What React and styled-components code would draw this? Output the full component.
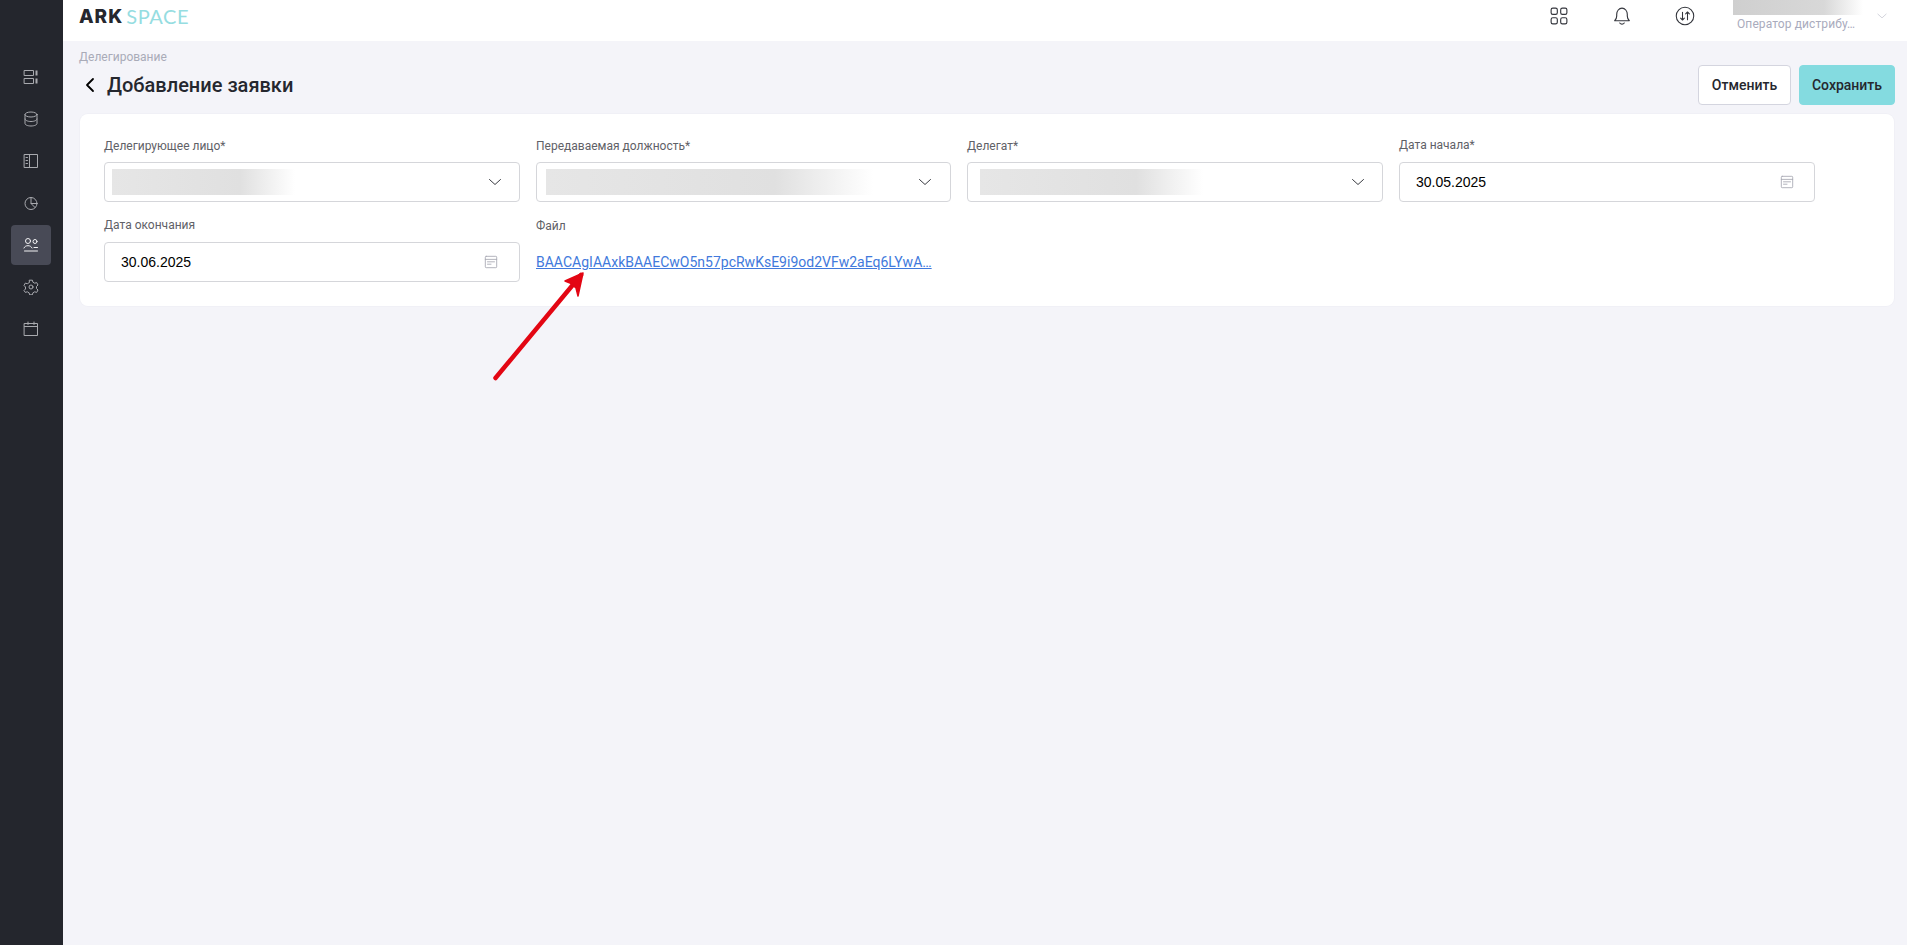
import React from 'react'
import styled, { createGlobalStyle } from 'styled-components'

const GlobalStyle = createGlobalStyle`
    html, body {
        margin: 0;
        padding: 0;
        height: 100%;
        overflow: hidden;
        background-color: #f4f4f9;
        font-family: Roboto, "Liberation Sans", sans-serif;
    }
    * {
        box-sizing: border-box;
    }
`

const Page = styled.div`
    position: relative;
    display: flex;
    height: 945px;
`

const Sidebar = styled.nav`
    display: flex;
    flex-direction: column;
    align-items: center;
    gap: 2px;
    flex: 0 0 63px;
    padding: 57px 1px 0 0;
    background-color: #24262d;
`

const NavItem = styled.div`
    display: flex;
    align-items: center;
    justify-content: center;
    width: 40px;
    height: 40px;
    border-radius: 4px;
    color: ${p => (p.$active ? '#f2f2f4' : '#a9aaaf')};
    background-color: ${p => (p.$active ? '#484a56' : 'transparent')};
`

const Main = styled.div`
    flex: 1;
    display: flex;
    flex-direction: column;
    min-width: 0;
`

const Header = styled.header`
    display: flex;
    justify-content: space-between;
    height: 41px;
    padding: 0 19px 0 16px;
    background-color: #fff;
`

const Logo = styled.div`
    display: flex;
    align-items: center;
    height: 32px;
    font-size: 20px;
    line-height: 1;
`

const LogoDark = styled.span`
    font-family: Inter, sans-serif;
    font-size: 19px;
    font-weight: 800;
    letter-spacing: 1px;
    color: #25272e;
`

const LogoLight = styled.span`
    margin-left: 3px;
    font-family: Lato, sans-serif;
    font-weight: 400;
    letter-spacing: 0.6px;
    color: #96dde1;
`

const HeaderRight = styled.div`
    display: flex;
    align-items: flex-start;
`

const HeaderIcons = styled.div`
    display: flex;
    align-items: center;
    gap: 44px;
    height: 32px;
    color: #33353c;
`

const GridIconSlot = styled.span`
    display: flex;
    margin-right: 1px;
`

const UserBlock = styled.div`
    width: 130px;
    margin-left: 38px;
`

const UserName = styled.div`
    height: 15px;
    background: linear-gradient(90deg, #cfcfcf 0%, #d8d8d8 70%, #ffffff 100%);
`

const UserRole = styled.div`
    margin-top: 2px;
    padding-left: 4px;
    font-size: 12px;
    line-height: 14px;
    letter-spacing: 0.1px;
    color: #a9abbd;
    white-space: nowrap;
`

const UserChevron = styled.div`
    display: flex;
    align-items: center;
    height: 32px;
    margin-left: 13px;
    color: #c4c6d0;
`

const Content = styled.main`
    padding: 0 13px 0 17px;
`

const Breadcrumb = styled.div`
    height: 24px;
    margin-left: -1px;
    padding-top: 9px;
    font-size: 12px;
    line-height: 14px;
    color: #a9abb8;
`

const TitleRow = styled.div`
    display: flex;
    align-items: center;
    justify-content: space-between;
    height: 40px;
`

const TitleGroup = styled.div`
    display: flex;
    align-items: center;
    gap: 9px;
    padding-left: 2px;
`

const Title = styled.h1`
    margin: 0;
    font-size: 20px;
    line-height: 24px;
    font-weight: 500;
    color: #25272e;
`

const Actions = styled.div`
    display: flex;
    gap: 8px;
    margin-right: -1px;
`

const Button = styled.button`
    height: 40px;
    width: ${p => p.$width}px;
    padding: 0;
    border-radius: 4px;
    border: 1px solid ${p => (p.$primary ? '#84dbe0' : '#d4d5df')};
    background-color: ${p => (p.$primary ? '#84dbe0' : '#fff')};
    font-family: Roboto, sans-serif;
    font-size: 14px;
    font-weight: 500;
    color: #25272e;
`

const Card = styled.section`
    display: grid;
    grid-template-columns: 416px 415px 416px 416px;
    column-gap: 16px;
    row-gap: 16px;
    height: 192px;
    margin-top: 9px;
    padding: 24px;
    border-radius: 8px;
    background-color: #fff;
    box-shadow: 0 0 0 1px #f0f0f6;
`

const Field = styled.div`
    min-width: 0;
`

const Label = styled.div`
    height: 24px;
    padding-top: ${p => (p.$raised ? 0 : 1)}px;
    font-size: 12px;
    line-height: 14px;
    color: #5f6167;
`

const Control = styled.div`
    display: flex;
    align-items: center;
    justify-content: space-between;
    height: 40px;
    padding: 0 ${p => p.$right}px 0 ${p => p.$left}px;
    border: 1px solid #d5d6da;
    border-radius: 4px;
    background-color: #fff;
    color: #3a3c42;
`

const BlurredValue = styled.div`
    width: ${p => p.$width}px;
    height: 26px;
    background: linear-gradient(90deg, #e6e6e6 0%, #e0e0e0 70%, #ffffff 100%);
`

const DateValue = styled.span`
    font-family: "Liberation Sans", Arial, sans-serif;
    font-size: 14px;
    color: #000;
`

const DateIcon = styled.span`
    display: flex;
    color: #a8a9b4;
`

const FileLink = styled.a`
    display: block;
    margin-top: 11px;
    font-size: 14px;
    line-height: 18px;
    color: #4179dc;
    text-decoration: underline;
    white-space: nowrap;
`

const Arrow = styled.svg`
    position: absolute;
    left: 490px;
    top: 265px;
    pointer-events: none;
`

const Icon = ({ size = 16, sw = 1, children }) => (
    <svg
        width={size}
        height={size}
        viewBox="0 0 16 16"
        fill="none"
        stroke="currentColor"
        strokeWidth={sw}
        strokeLinecap="round"
        strokeLinejoin="round"
    >
        {children}
    </svg>
)

const navIcons = [
    <>
        <rect x="1.5" y="1.5" width="9" height="5" />
        <rect x="1.5" y="9.5" width="9" height="5" />
        <path d="M13.5 1.5v5M13.5 9.5v5" strokeWidth="2" strokeLinecap="butt" />
    </>,
    <>
        <ellipse cx="8" cy="3.5" rx="6" ry="2.5" />
        <path d="M2 3.5v9c0 1.4 2.7 2.5 6 2.5s6-1.1 6-2.5v-9" />
        <path d="M2 8c0 1.4 2.7 2.5 6 2.5s6-1.1 6-2.5" />
    </>,
    <>
        <rect x="1.5" y="1.5" width="13" height="13" />
        <path d="M6.5 1.5v13M3 4.5h1.5M3 7.5h1.5M3 10.5h1.5" />
    </>,
    <>
        <circle cx="8" cy="8.5" r="6" />
        <path d="M8 2.5v6h6" />
        <path d="M8 8.5l4 4" />
    </>,
    <>
        <circle cx="5" cy="4" r="2.5" />
        <circle cx="12" cy="4.5" r="2" />
        <path d="M1 11c.6-1.5 2-2.3 4-2.3s3.2.8 4 2.3M1.5 14h13M11 10.5h3.5" />
    </>,
    <>
        <path d="M6.6 1.5h2.8l.5 2 1.8 1 2-.6 1.3 2.4-1.5 1.5v2l1.5 1.5-1.3 2.4-2-.6-1.8 1-.5 2H6.6l-.5-2-1.8-1-2 .6L1 11.8l1.5-1.5v-2L1 6.8l1.3-2.4 2 .6 1.8-1z" transform="translate(0 -.3)" />
        <circle cx="8" cy="8" r="2" />
    </>,
    <>
        <rect x="1.5" y="2.5" width="13" height="12" />
        <path d="M1.5 5.5h13M5 1v2.5M11 1v2.5" />
    </>,
]

const Chevron = ({ size = 16 }) => (
    <Icon size={size}>
        <path d="M2.5 5.5L8 10.5l5.5-5" />
    </Icon>
)

const CalendarIcon = () => (
    <Icon size={14}>
        <rect x="1.5" y="1.5" width="13" height="13" rx="1" />
        <path d="M1.5 5h13M4 7.8h8M4 10.5h4" />
    </Icon>
)

const selects = [
    { label: 'Делегирующее лицо*', blur: 183, left: 7, right: 16 },
    { label: 'Передаваемая должность*', blur: 327, left: 9, right: 17 },
    { label: 'Делегат*', blur: 223, left: 12, right: 16 },
]

const App = () => {
    return (
        <Page>
            <GlobalStyle />
            <Sidebar>
                {navIcons.map((icon, i) => (
                    <NavItem key={i} $active={i === 4}>
                        <Icon>{icon}</Icon>
                    </NavItem>
                ))}
            </Sidebar>
            <Main>
                <Header>
                    <Logo>
                        <LogoDark>ARK</LogoDark>
                        <LogoLight>SPACE</LogoLight>
                    </Logo>
                    <HeaderRight>
                        <HeaderIcons>
                            <GridIconSlot>
                                <Icon size={18}>
                                    <rect x="1" y="1" width="5.5" height="5.5" rx="1.5" />
                                    <rect x="9.5" y="1" width="5.5" height="5.5" rx="1.5" />
                                    <rect x="1" y="9.5" width="5.5" height="5.5" rx="1.5" />
                                    <rect x="9.5" y="9.5" width="5.5" height="5.5" rx="1.5" />
                                </Icon>
                            </GridIconSlot>
                            <Icon size={18}>
                                <path d="M1.5 12.2c1-1 1.8-2 1.8-4.2V6.5C3.3 3.6 5.3 1 8 1s4.7 2.6 4.7 5.5V8c0 2.2.8 3.2 1.8 4.2z" />
                                <path d="M6 14.2c.5.7 1.2 1 2 1s1.500-.3 2-1" />
                            </Icon>
                            <Icon size={20} sw={0.85}>
                                <circle cx="8" cy="8" r="7" />
                                <path d="M6 5v6.200M4.500 9.700L6 11.200l1.500-1.500M10 11V4.800M8.500 6.300L10 4.800l1.500 1.500" />
                            </Icon>
                        </HeaderIcons>
                        <UserBlock>
                            <UserName />
                            <UserRole>Оператор дистрибу…</UserRole>
                        </UserBlock>
                        <UserChevron>
                            <Chevron size={12} />
                        </UserChevron>
                    </HeaderRight>
                </Header>
                <Content>
                    <Breadcrumb>Делегирование</Breadcrumb>
                    <TitleRow>
                        <TitleGroup>
                            <Icon size={16} sw={1.8}>
                                <path d="M11 2L5 8l6 6" />
                            </Icon>
                            <Title>Добавление заявки</Title>
                        </TitleGroup>
                        <Actions>
                            <Button $width={93}>Отменить</Button>
                            <Button $width={96} $primary>Сохранить</Button>
                        </Actions>
                    </TitleRow>
                    <Card>
                        {selects.map(s => (
                            <Field key={s.label}>
                                <Label>{s.label}</Label>
                                <Control $left={s.left} $right={s.right}>
                                    <BlurredValue $width={s.blur} />
                                    <Chevron />
                                </Control>
                            </Field>
                        ))}
                        <Field>
                            <Label $raised>Дата начала*</Label>
                            <Control $left={16} $right={20}>
                                <DateValue>30.05.2025</DateValue>
                                <DateIcon><CalendarIcon /></DateIcon>
                            </Control>
                        </Field>
                        <Field>
                            <Label $raised>Дата окончания</Label>
                            <Control $left={16} $right={21}>
                                <DateValue>30.06.2025</DateValue>
                                <DateIcon><CalendarIcon /></DateIcon>
                            </Control>
                        </Field>
                        <Field>
                            <Label>Файл</Label>
                            <FileLink href="#">BAACAgIAAxkBAAECwO5n57pcRwKsE9i9od2VFw2aEq6LYwA…</FileLink>
                        </Field>
                    </Card>
                </Content>
            </Main>
            <Arrow width="100" height="120" viewBox="0 0 100 120">
                <path d="M5.500 113L91 10" stroke="#e30613" strokeWidth="4.500" strokeLinecap="round" fill="none" />
                <path d="M93 8L75 16l5 2 6 5 2 8z" fill="#e30613" stroke="#e30613" strokeWidth="1.500" strokeLinejoin="round" />
            </Arrow>
        </Page>
    )
}

export default App
